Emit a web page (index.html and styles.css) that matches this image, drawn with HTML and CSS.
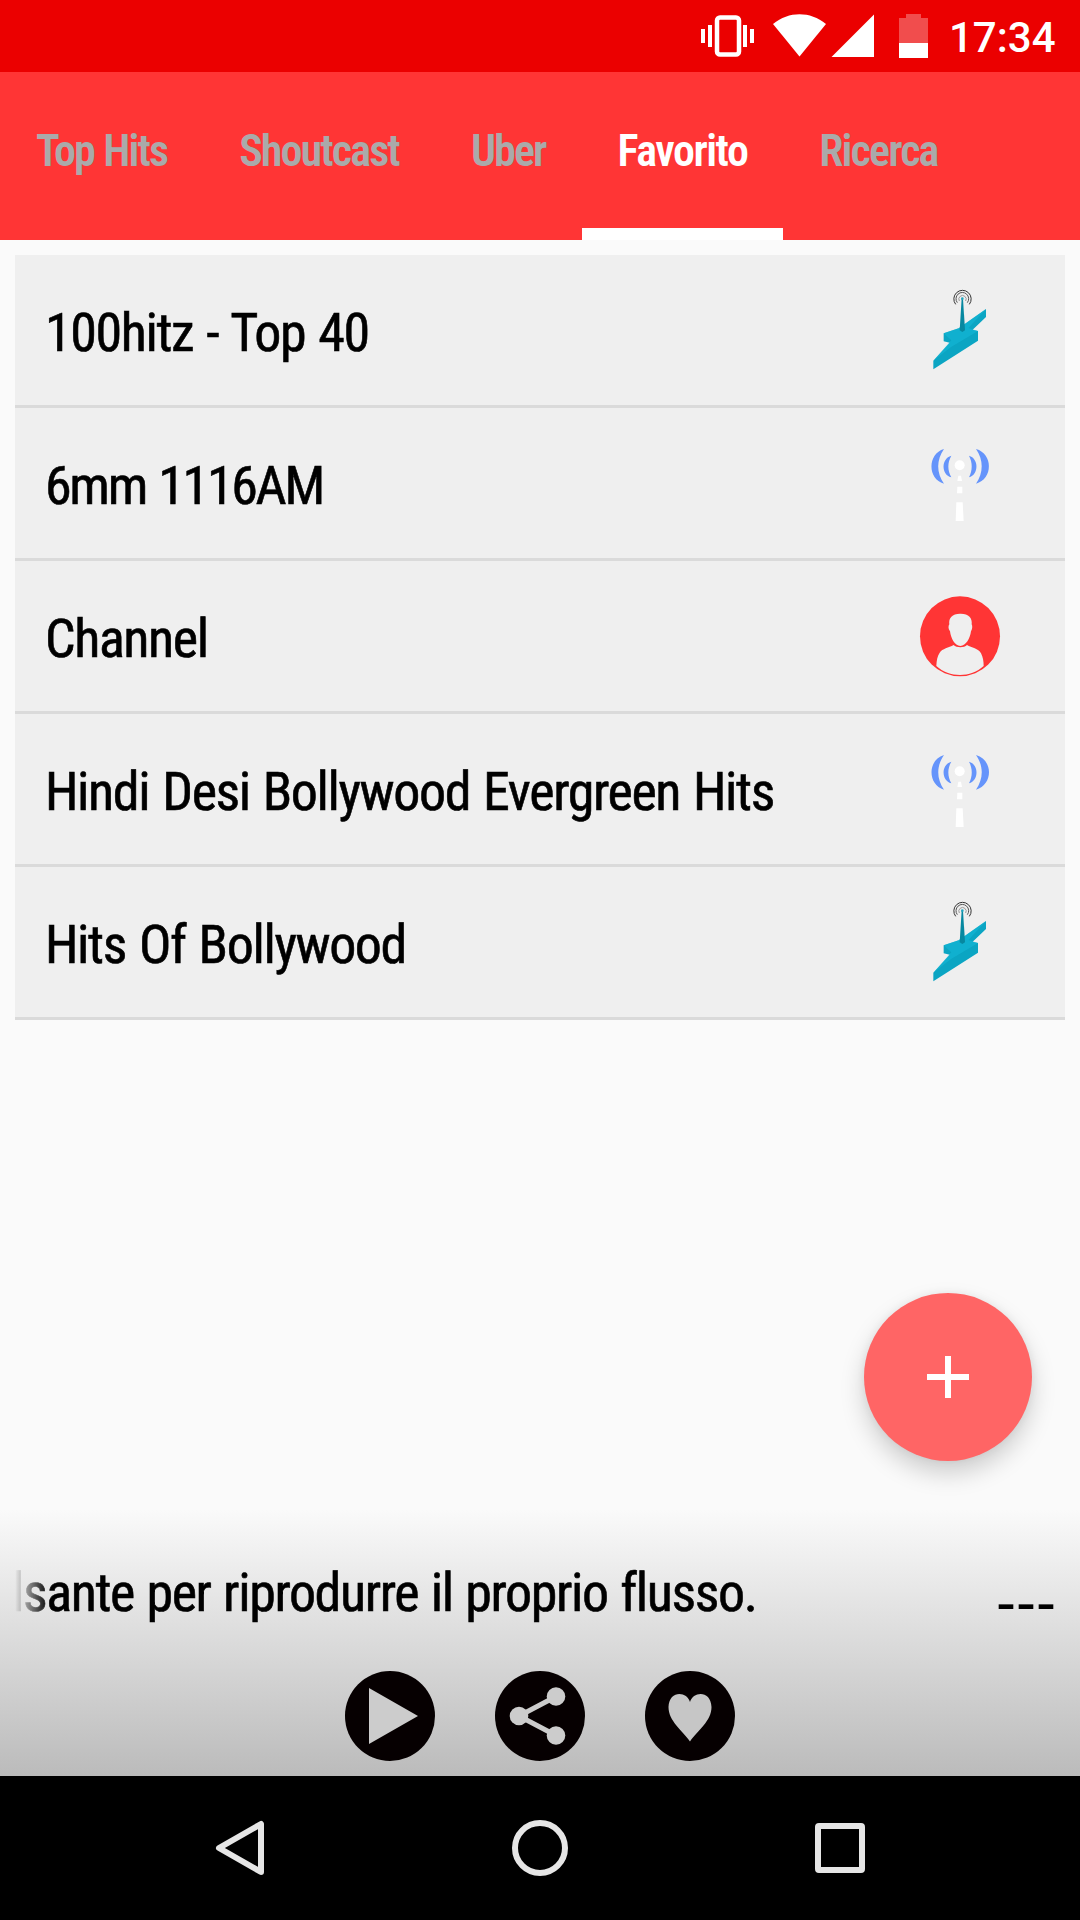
FILE: index.html
```html
<!DOCTYPE html>
<html lang="it">
<head>
    <meta charset="UTF-8">
    <meta name="viewport" content="width=device-width, initial-scale=1.0">
    <title>Radio - Favorito</title>
    <link rel="stylesheet" href="styles.css">
</head>
<body>
    <!-- shared icons -->
    <svg class="sprite">
        <symbol id="shoutcast" viewBox="0 0 360 360">
            <path fill="#0ba5c3" d="M258 117V141L218 179L234 183V212L100 298V272L149 218L131 214V190L176 175Z"/>
            <path fill="#16bad8" d="M258 117L205 174L234 183L153 231L100 272L154 211L131 190L176 175Z" opacity=".55"/>
            <path fill="#0788a0" d="M185 86H189L195 181L187 186L179 181Z"/>
            <circle cx="187" cy="86" r="4" fill="#21a4bd"/>
            <g fill="none" stroke="#555" stroke-width="3">
                <path d="M167 103A26 26 0 1 1 208 103" stroke="#333"/>
                <path d="M172 98A19 19 0 1 1 202 98"/>
                <path d="M178 93A11 11 0 1 1 197 93" stroke="#999"/>
            </g>
        </symbol>
        <symbol id="antenna" viewBox="0 0 360 360">
            <g fill="#6594fb">
                <path d="M132 78C82 92 82 168 132 182C109 149 109 111 132 78Z"/>
                <path d="M154 98C123 106 123 155 154 163C142 142 142 119 154 98Z"/>
                <path d="M228 78C280 92 280 168 228 182C251 149 251 111 228 78Z"/>
                <path d="M207 98C237 106 237 155 207 163C218 142 218 119 207 98Z"/>
            </g>
            <g fill="#fff">
                <circle cx="179" cy="127" r="15"/>
                <path d="M175 158H183L186 174H172ZM172 191H187V211H171ZM169 238H188L191 294H167Z"/>
            </g>
        </symbol>
        <symbol id="person" viewBox="0 0 360 360">
            <circle cx="180" cy="181" r="120" fill="#ff3535"/>
            <path fill="#efefef" d="M180 113C205 112 218 126 215 145C218 150 217 160 213 166C210 188 198 209 181 210C164 209 153 188 150 166C145 160 144 150 148 145C145 126 157 113 180 113Z"/>
            <path fill="#efefef" d="M161 207C170 216 192 216 201 207C215 216 235 216 243 232C249 244 251 255 251 270C212 306 148 306 109 270C110 253 112 240 119 230C127 217 146 216 161 207Z"/>
        </symbol>
    </svg>

    <div class="status">
        <svg class="status-icons" viewBox="0 0 240 72">
            <g fill="#fff">
                <path d="M1 29H5V43H1ZM8 25H12V47H8ZM43 25H47V47H43ZM50 29H54V43H50Z"/>
                <rect x="17" y="17.500" width="22" height="37" rx="3" fill="none" stroke="#fff" stroke-width="4.500"/>
                <path d="M73 24C89 11 110 11 126 24L99.500 56.500Z"/>
                <path d="M174 14.500V57H131.500Z"/>
                <path d="M206 14H221V18H228V43H199V18H206Z" opacity=".3"/>
                <path d="M199 43H228V58H199Z"/>
            </g>
        </svg>
        <span class="clock">17:34</span>
    </div>

    <div class="tabs">
        <div class="tab"><span>Top Hits</span></div>
        <div class="tab"><span>Shoutcast</span></div>
        <div class="tab"><span>Uber</span></div>
        <div class="tab active"><span>Favorito</span></div>
        <div class="tab"><span>Ricerca</span></div>
    </div>

    <div class="content">
        <div class="row"><span>100hitz - Top 40</span><svg><use href="#shoutcast"/></svg></div>
        <div class="row"><span class="tight">6mm 1116AM</span><svg><use href="#antenna"/></svg></div>
        <div class="row"><span>Channel</span><svg><use href="#person"/></svg></div>
        <div class="row"><span>Hindi Desi Bollywood Evergreen Hits</span><svg><use href="#antenna"/></svg></div>
        <div class="row"><span>Hits Of Bollywood</span><svg><use href="#shoutcast"/></svg></div>
    </div>

    <button class="fab">
        <svg viewBox="0 0 42 42"><path d="M21 0V42M0 21H42" stroke="#fff" stroke-width="6"/></svg>
    </button>

    <div class="player">
        <div class="info">
            <div class="marquee"><span>lsante per riprodurre il proprio flusso.</span></div>
            <div class="time"><span>---</span></div>
        </div>
        <div class="controls">
            <svg viewBox="0 0 90 90">
                <circle cx="45" cy="45" r="45" fill="#060001"/>
                <path d="M24 17V73L73 45Z" fill="#ccc"/>
            </svg>
            <svg viewBox="0 0 90 90">
                <circle cx="45" cy="45" r="45" fill="#060001"/>
                <path d="M61 25.500L24 45L61 64.500" fill="none" stroke="#ccc" stroke-width="5"/>
                <g fill="#ccc"><circle cx="61" cy="25.500" r="9.300"/><circle cx="24" cy="45" r="9.300"/><circle cx="61" cy="64.500" r="9.300"/></g>
            </svg>
            <svg viewBox="0 0 90 90">
                <circle cx="45" cy="45" r="45" fill="#060001"/>
                <path d="M45 31C42 20 24 19 23.500 36C23.500 50 37 59 45 70.500C53 59 66.500 50 66.500 36C66 19 48 20 45 31Z" fill="#c6c6c6"/>
            </svg>
        </div>
    </div>

    <div class="navbar">
        <svg viewBox="0 0 60 60"><path d="M51 6V54L9 30Z"/></svg>
        <svg viewBox="0 0 60 60"><circle cx="30" cy="30" r="25"/></svg>
        <svg viewBox="0 0 60 60"><rect x="8" y="8" width="44" height="44" rx="1"/></svg>
    </div>
</body>
</html>
```
FILE: styles.css
```css
body {
    margin: 0;
    width: 1080px;
    height: 1920px;
    display: flex;
    flex-direction: column;
    background-color: #fafafa;
    color: #000;
    font-family: 'Roboto Condensed', 'Roboto', sans-serif;
    font-stretch: 75%;
    overflow: hidden;
}
.sprite {
    display: none;
}
.status {
    height: 72px;
    display: flex;
    justify-content: flex-end;
    align-items: center;
    background-color: #eb0000;
    color: #fff;
}
.status-icons {
    width: 240px;
    height: 72px;
}
.clock {
    width: 131px;
    padding: 2px 0 0 9px;
    font-family: 'Roboto', sans-serif;
    font-stretch: 100%;
    font-size: 42px;
    font-weight: 500;
}
/* Tabs */
.tabs {
    height: 168px;
    display: flex;
    background-color: #ff3535;
    color: #aaa;
    font-size: 44px;
    font-weight: 650;
    letter-spacing: -1.85px;
    word-spacing: 1px;
}
.tab {
    box-sizing: border-box;
    padding: 2px 36px 0;
    display: flex;
    align-items: center;
    border-bottom: 12px solid transparent;
}
.tab.active {
    color: #fff;
    border-bottom-color: #fff;
    letter-spacing: -1.5px;
}
/* Station list */
.content {
    flex: 1;
    padding: 15px;
    font-size: 54px;
    letter-spacing: -1.4px;
    word-spacing: 2px;
    -webkit-text-stroke: 0.6px #000;
}
.row {
    height: 150px;
    padding: 0 45px 0 30px;
    display: flex;
    justify-content: space-between;
    align-items: center;
    background-color: #efefef;
    border-bottom: 3px solid #dadada;
}
.row span {
    padding-top: 4px;
}
.row .tight {
    letter-spacing: -2.3px;
}
.row svg {
    width: 120px;
    height: 120px;
}
.fab {
    position: absolute;
    left: 864px;
    top: 1293px;
    width: 168px;
    height: 168px;
    padding: 0;
    border: 0;
    border-radius: 50%;
    background-color: #ff6565;
    box-shadow: 0 12px 24px rgba(0, 0, 0, 0.18), 0 0 8px rgba(0, 0, 0, 0.06);
}
.fab svg {
    display: block;
    width: 42px;
    height: 42px;
    margin: auto;
}
/* Player */
.player {
    height: 266px;
    background: linear-gradient(#fafafa, #bbb);
    font-size: 54px;
    letter-spacing: -1.4px;
    word-spacing: 1.5px;
}
.info {
    height: 161px;
    padding: 0 24px 0 12px;
    display: flex;
    justify-content: space-between;
    align-items: center;
}
.marquee {
    padding-top: 3px;
    white-space: nowrap;
    -webkit-text-stroke: 0.6px #000;
    -webkit-mask-image: linear-gradient(to right, transparent 3px, #000 37px);
    mask-image: linear-gradient(to right, transparent 3px, #000 37px);
}
.time {
    padding-top: 22px;
    font-family: 'Liberation Sans', sans-serif;
    font-size: 60px;
    letter-spacing: 0;
}
.controls {
    display: flex;
    justify-content: center;
    gap: 60px;
}
.controls svg {
    width: 90px;
    height: 90px;
}
/* System buttons */
.navbar {
    height: 144px;
    display: flex;
    justify-content: center;
    align-items: center;
    gap: 240px;
    background-color: #000;
}
.navbar svg {
    width: 60px;
    height: 60px;
    fill: none;
    stroke: #e6e6e6;
    stroke-width: 6;
    stroke-linejoin: round;
}
```
